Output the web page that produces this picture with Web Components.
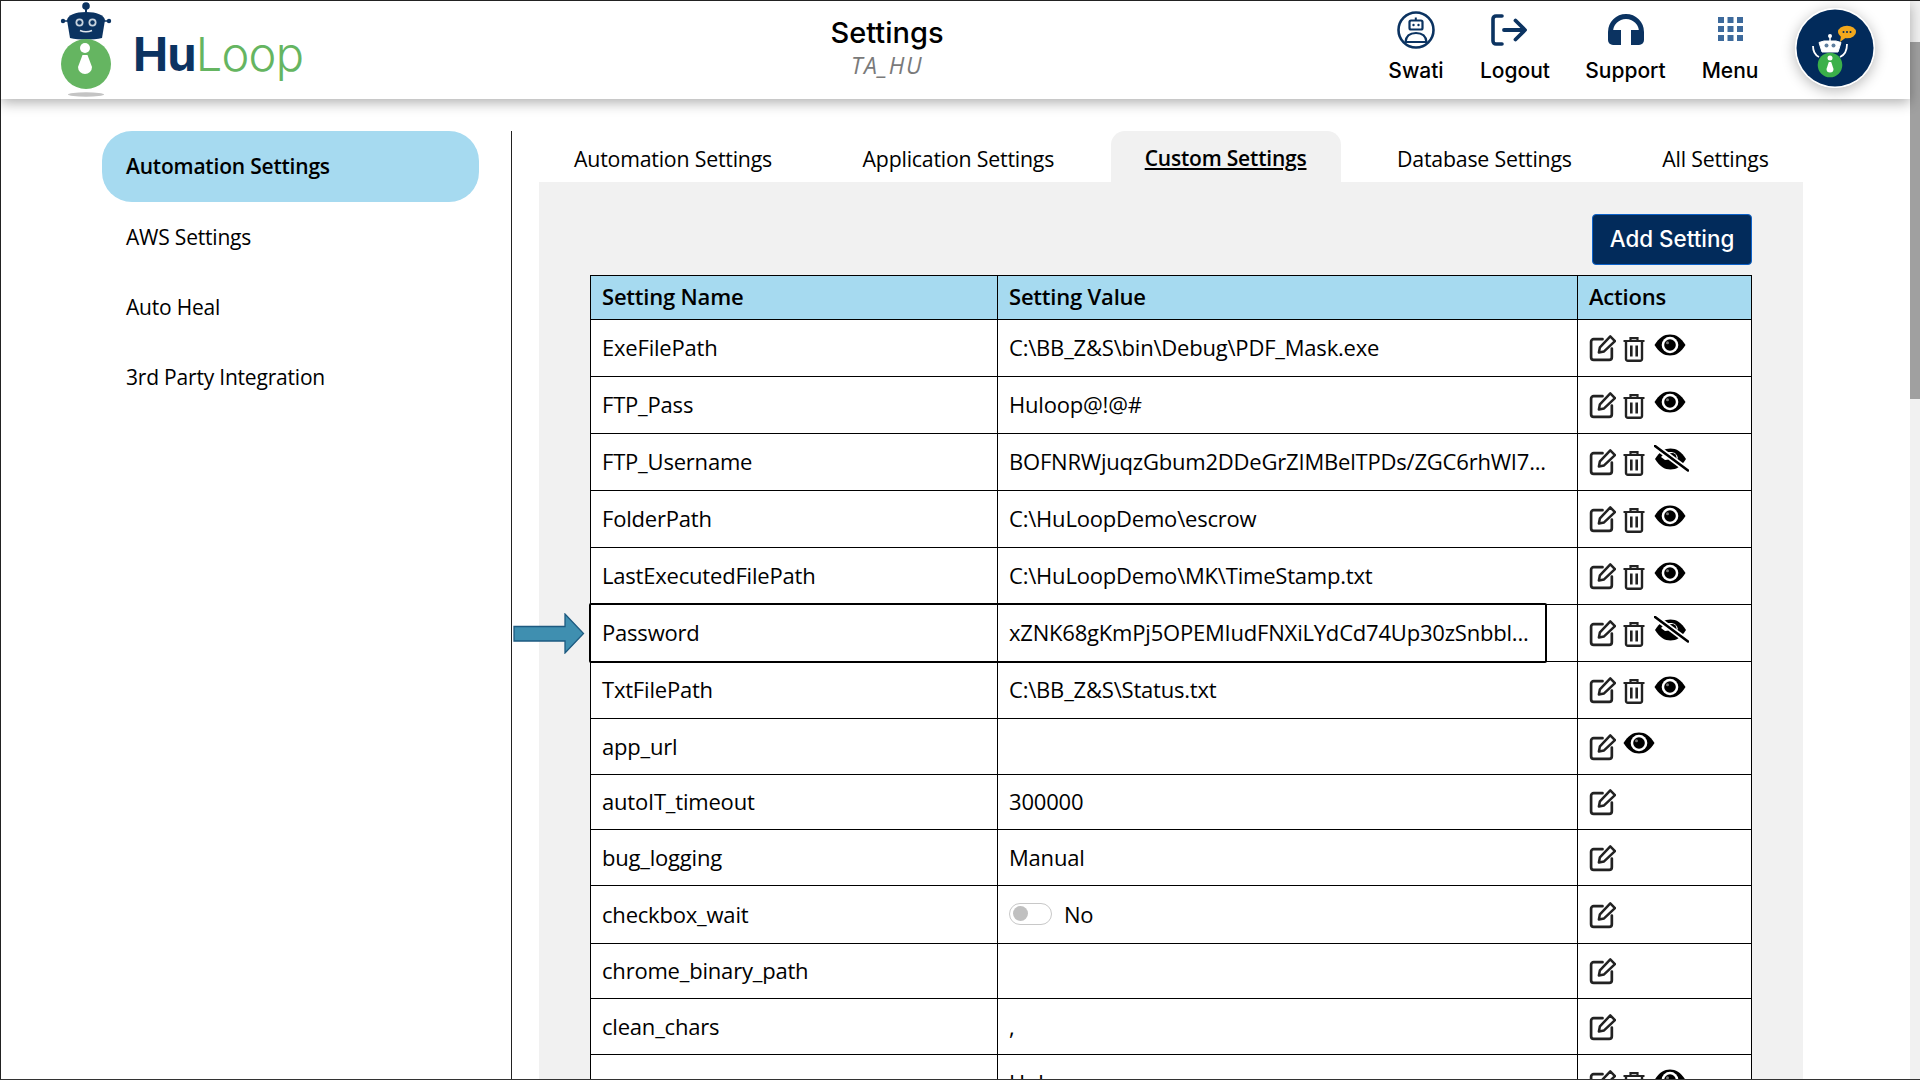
<!DOCTYPE html>
<html lang="en">
<head>
<meta charset="utf-8">
<title>Settings</title>
<style>
    html, body { margin: 0; padding: 0; background: #fff; overflow: hidden; }
    hl-app { font-family: "Open Sans", "Liberation Sans", sans-serif; color: #000; }
</style>
</head>
<body>
<hl-app></hl-app>

<script>
const ICONS = {
    edit: `<svg width="27" height="28" viewBox="0 0 26 27"><path d="M13 5H4.5A2.5 2.5 0 0 0 2 7.500V22.500A2.500 2.500 0 0 0 4.500 25H19.500A2.500 2.500 0 0 0 22 22.500V14" fill="none" stroke="#222" stroke-width="2.600" stroke-linecap="round"/><path d="M9.500 17.800L10.500 12.800L20.500 2.300L25 6.800L14.500 16.800Z" fill="none" stroke="#222" stroke-width="2.400" stroke-linejoin="round"/></svg>`,
    trash: `<svg width="22" height="25" viewBox="0 0 22 25"><path d="M0.500 4H21.500M7.500 3.500V1.200H14.500V3.500" fill="none" stroke="#222" stroke-width="2.200"/><path d="M3 4.500V22A1.800 1.800 0 0 0 4.800 23.800H17.200A1.800 1.800 0 0 0 19 22V4.500" fill="none" stroke="#222" stroke-width="2.400"/><path d="M8.300 8.500V19.500M13.700 8.500V19.500" stroke="#222" stroke-width="2.600"/></svg>`,
    eye: `<svg width="32" height="22" viewBox="0 0 32 22"><path d="M0.500 11C5 3.500 10 0.500 16 0.500S27 3.500 31.500 11C27 18.500 22 21.500 16 21.500S5 18.500 0.500 11Z" fill="#000"/><circle cx="16" cy="11" r="8.300" fill="#fff"/><circle cx="16" cy="11" r="5.800" fill="#000"/><circle cx="13.500" cy="8.800" r="1.500" fill="#777"/></svg>`,
    eyeoff: `<svg width="35" height="27" viewBox="0 0 35 27"><path d="M1 14C5.500 6.500 10.500 3.500 16.500 3.500S27.500 6.500 32 14C27.500 21.500 22.500 24.500 16.500 24.500S5.500 21.500 1 14Z" fill="#000"/><path d="M7 12C10 8.500 13 7 16.500 7C20.500 7 23 9 24 13.500L11 15Z" fill="#fff"/><circle cx="18" cy="12.500" r="4.500" fill="#000"/><path d="M1 1L34 25.500" stroke="#fff" stroke-width="6"/><path d="M1 1L34 25.500" stroke="#000" stroke-width="2.600" stroke-linecap="round"/></svg>`,
    user: `<svg width="38" height="38" viewBox="0 0 38 38"><circle cx="19" cy="19" r="17.500" fill="none" stroke="#0b3361" stroke-width="2.600"/><path d="M18.800 6.500V10" stroke="#0b3361" stroke-width="2"/><rect x="12.500" y="9.500" width="13" height="9" rx="1.500" fill="none" stroke="#0b3361" stroke-width="2.200"/><circle cx="16.500" cy="14" r="1.200" fill="#0b3361"/><circle cx="21.500" cy="14" r="1.200" fill="#0b3361"/><path d="M8.500 31C9 25 13 22 19 22S29 25 29.500 31Z" fill="none" stroke="#0b3361" stroke-width="2.200" stroke-linejoin="round"/></svg>`,
    logout: `<svg width="36" height="32" viewBox="0 0 36 32"><path d="M11 2H5A3 3 0 0 0 2 5V27A3 3 0 0 0 5 30H11" fill="none" stroke="#0b3361" stroke-width="3.600" stroke-linecap="round"/><path d="M13 16H33M24.500 6.500L34 16L24.500 25.500" fill="none" stroke="#0b3361" stroke-width="3.800" stroke-linecap="round" stroke-linejoin="round"/></svg>`,
    support: `<svg width="36" height="32" viewBox="0 0 36 32"><path d="M2.500 22V18A15.500 15.500 0 0 1 33.500 18V22" fill="none" stroke="#0b3361" stroke-width="5"/><path d="M13 16V31H5A5 5 0 0 1 0 26V21A5 5 0 0 1 5 16Z" fill="#0b3361"/><path d="M23 16V31H31A5 5 0 0 0 36 26V21A5 5 0 0 0 31 16Z" fill="#0b3361"/></svg>`,
    menu: `<svg width="25" height="24" viewBox="0 0 25 24" fill="#3d6a9c"><rect x="0" y="0" width="6" height="6"/><rect x="9.500" y="0" width="6" height="6"/><rect x="19" y="0" width="6" height="6"/><rect x="0" y="9" width="6" height="6"/><rect x="9.500" y="9" width="6" height="6"/><rect x="19" y="9" width="6" height="6"/><rect x="0" y="18" width="6" height="6"/><rect x="9.500" y="18" width="6" height="6"/><rect x="19" y="18" width="6" height="6"/></svg>`
};

class HlIcon extends HTMLElement {
    constructor() {
        super();
        this.attachShadow({ mode: 'open' });
    }

    connectedCallback() {
        this.shadowRoot.innerHTML = `
            <style>
                :host { display: inline-flex; flex: none; line-height: 0; }
            </style>
            ${ICONS[this.getAttribute('name')]}`;
    }
}
customElements.define('hl-icon', HlIcon);

const logoTemplate = document.createElement('template');
logoTemplate.innerHTML = `
    <style>
        :host { display: flex; align-items: flex-start; height: 98px; }
        svg { display: block; flex: none; }
        .word {
            margin: 22px 0 0 18px;
            font-family: Inter, "Liberation Sans", sans-serif;
            font-size: 47px;
            line-height: 62px;
            letter-spacing: -0.8px;
            white-space: nowrap;
        }
        .hu { color: #0b3361; font-weight: 700; }
        .loop { color: #65b561; font-weight: 300; }
    </style>
    <svg width="60" height="99" viewBox="0 0 60 99">
        <ellipse cx="31" cy="93.500" rx="18" ry="2.200" fill="#c4c4c4"/>
        <path d="M31 5V12" stroke="#0b3361" stroke-width="2"/>
        <circle cx="31" cy="5" r="3.800" fill="#0b3361"/>
        <circle cx="8" cy="20" r="2.200" fill="#0b3361"/>
        <circle cx="54" cy="20" r="2.200" fill="#0b3361"/>
        <path d="M8 20H15M47 20H54" stroke="#0b3361" stroke-width="1.600"/>
        <path d="M12 19C13 14 20 11 31 11S49 14 50 19L47 37C38 39 24 39 15 37Z" fill="#0b3361"/>
        <circle cx="24.500" cy="21.500" r="4" fill="#c8d3de"/><circle cx="24.500" cy="21.500" r="2.200" fill="#0b3361"/>
        <circle cx="37.500" cy="21.500" r="4" fill="#c8d3de"/><circle cx="37.500" cy="21.500" r="2.200" fill="#0b3361"/>
        <path d="M25 29.500Q31 32 37 29.500" fill="none" stroke="#dfe6ec" stroke-width="1.600"/>
        <circle cx="31" cy="63" r="25" fill="#65b561"/>
        <circle cx="30" cy="47" r="5" fill="#fff"/>
        <path d="M27.500 54H32.500L37 66A6.800 6.800 0 0 1 23 66Z" fill="#fff"/>
    </svg>
    <span class="word"><span class="hu">Hu</span><span class="loop">Loop</span></span>`;

class HlLogo extends HTMLElement {
    constructor() {
        super();
        this.attachShadow({ mode: 'open' }).appendChild(logoTemplate.content.cloneNode(true));
    }
}
customElements.define('hl-logo', HlLogo);

const navTemplate = document.createElement('template');
navTemplate.innerHTML = `
    <style>
        :host { display: flex; flex-direction: column; align-items: center; height: 98px; }
        .icon { height: 57px; display: flex; align-items: flex-start; justify-content: center; }
        ::slotted(hl-icon) { margin-top: var(--icon-top, 13px); margin-right: var(--icon-shift, 0); }
        .label {
            font-family: Inter, "Liberation Sans", sans-serif;
            font-weight: 500;
            font-size: 21px;
            line-height: 26px;
            white-space: nowrap;
        }
    </style>
    <div class="icon"><slot name="icon"></slot></div>
    <div class="label"><slot></slot></div>`;

class HlNavItem extends HTMLElement {
    constructor() {
        super();
        this.attachShadow({ mode: 'open' }).appendChild(navTemplate.content.cloneNode(true));
    }
}
customElements.define('hl-nav-item', HlNavItem);

const avatarTemplate = document.createElement('template');
avatarTemplate.innerHTML = `
    <style>
        :host { display: block; width: 80px; height: 80px; border-radius: 50%; box-shadow: 0 3px 14px rgba(0,0,0,.28); }
        svg { display: block; }
    </style>
    <svg width="80" height="80" viewBox="0 0 80 80">
        <circle cx="40" cy="40" r="40" fill="#fff"/>
        <circle cx="40" cy="40" r="38.500" fill="#022b5b"/>
        <ellipse cx="52" cy="24" rx="9" ry="6.300" fill="#f2a81d"/>
        <path d="M46 28L45 34L51 29.500Z" fill="#f2a81d"/>
        <circle cx="48.500" cy="24" r="1" fill="#022b5b"/><circle cx="52" cy="24" r="1" fill="#022b5b"/><circle cx="55.500" cy="24" r="1" fill="#022b5b"/>
        <path d="M35 28V34" stroke="#fff" stroke-width="1.500"/><circle cx="35" cy="28" r="2" fill="#fff"/>
        <path d="M24 34.500L29 33H41L46 34.500L43 44H27Z" fill="#fff" stroke="#fff" stroke-width="1" stroke-linejoin="round"/>
        <circle cx="31.500" cy="37.500" r="2" fill="#5e7e9e"/><circle cx="38.500" cy="37.500" r="2" fill="#5e7e9e"/>
        <path d="M18 38Q18 46 24 49M52 36Q52 46 45 49" fill="none" stroke="#fff" stroke-width="1.800"/>
        <circle cx="35" cy="57" r="12.300" fill="#3bb04a"/>
        <circle cx="35" cy="50" r="2.500" fill="#fff"/>
        <path d="M33.800 54H36.200L38.500 61A3.500 3.500 0 0 1 31.500 61Z" fill="#fff"/>
    </svg>`;

class HlAvatar extends HTMLElement {
    constructor() {
        super();
        this.attachShadow({ mode: 'open' }).appendChild(avatarTemplate.content.cloneNode(true));
    }
}
customElements.define('hl-avatar', HlAvatar);

const headerTemplate = document.createElement('template');
headerTemplate.innerHTML = `
    <style>
        :host {
            display: flex;
            position: relative;
            z-index: 2;
            height: 98px;
            background: #fff;
            box-shadow: 0 4px 12px rgba(0, 0, 0, .3);
        }
        hl-logo { width: 646px; margin-left: 54px; flex: none; }
        .title { width: 372px; flex: none; text-align: center; }
        h1 {
            margin: 15px 0 0;
            font: 500 29px/34px Inter, "Liberation Sans", sans-serif;
        }
        .sub {
            font: italic 400 23px/24px "Open Sans", "Liberation Sans", sans-serif;
            letter-spacing: 1.500px;
            color: #7a7a7a;
            margin-top: 3px;
        }
        nav { display: flex; gap: 36px; margin-left: 314px; }
        hl-avatar { margin: 7px 0 0 37px; flex: none; }
    </style>
    <hl-logo></hl-logo>
    <div class="title">
        <h1>Settings</h1>
        <div class="sub">TA_HU</div>
    </div>
    <nav>
        <hl-nav-item style="width: 58px; --icon-top: 10px"><hl-icon slot="icon" name="user"></hl-icon>Swati</hl-nav-item>
        <hl-nav-item style="width: 68px; --icon-shift: 12px"><hl-icon slot="icon" name="logout"></hl-icon>Logout</hl-nav-item>
        <hl-nav-item style="width: 81px"><hl-icon slot="icon" name="support"></hl-icon>Support</hl-nav-item>
        <hl-nav-item style="width: 56px; --icon-top: 16px"><hl-icon slot="icon" name="menu"></hl-icon>Menu</hl-nav-item>
    </nav>
    <hl-avatar></hl-avatar>`;

class HlHeader extends HTMLElement {
    constructor() {
        super();
        this.attachShadow({ mode: 'open' }).appendChild(headerTemplate.content.cloneNode(true));
    }
}
customElements.define('hl-header', HlHeader);

const sideTemplate = document.createElement('template');
sideTemplate.innerHTML = `
    <style>
        :host {
            display: block;
            box-sizing: border-box;
            width: 511px;
            flex: none;
            margin-top: 32px;
            padding: 0 32px 0 101px;
            border-right: 1px solid #222;
        }
        div {
            height: 71px;
            line-height: 71px;
            padding-left: 24px;
            font-size: 21px;
            letter-spacing: -0.2px;
            white-space: nowrap;
        }
        .active { background: #a6daf0; border-radius: 30px; font-weight: 600; }
        div + div { height: 70px; line-height: 70px; }
    </style>
    <div class="active">Automation Settings</div>
    <div>AWS Settings</div>
    <div>Auto Heal</div>
    <div>3rd Party Integration</div>`;

class HlSideNav extends HTMLElement {
    constructor() {
        super();
        this.attachShadow({ mode: 'open' }).appendChild(sideTemplate.content.cloneNode(true));
    }
}
customElements.define('hl-side-nav', HlSideNav);

const tabsTemplate = document.createElement('template');
tabsTemplate.innerHTML = `
    <style>
        :host { display: flex; gap: 22.500px; height: 51px; padding-left: 1px; }
        div {
            padding: 4px 34px 0;
            line-height: 47px;
            font-size: 21.300px;
            letter-spacing: -0.2px;
            white-space: nowrap;
        }
        .on {
            background: #f1f1f1;
            border-radius: 14px 14px 0 0;
            font-weight: 600;
            font-size: 21px;
            text-decoration: underline;
        }
    </style>
    <div>Automation Settings</div>
    <div>Application Settings</div>
    <div class="on">Custom Settings</div>
    <div>Database Settings</div>
    <div>All Settings</div>`;

class HlTabs extends HTMLElement {
    constructor() {
        super();
        this.attachShadow({ mode: 'open' }).appendChild(tabsTemplate.content.cloneNode(true));
    }
}
customElements.define('hl-tabs', HlTabs);

const ROWS = [
    ['ExeFilePath', 'C:\\BB_Z&S\\bin\\Debug\\PDF_Mask.exe', 'edit trash eye', 57],
    ['FTP_Pass', 'Huloop@!@#', 'edit trash eye', 57],
    ['FTP_Username', 'BOFNRWjuqzGbum2DDeGrZIMBelTPDs/ZGC6rhWI7...', 'edit trash eyeoff', 57],
    ['FolderPath', 'C:\\HuLoopDemo\\escrow', 'edit trash eye', 57],
    ['LastExecutedFilePath', 'C:\\HuLoopDemo\\MK\\TimeStamp.txt', 'edit trash eye', 57],
    ['Password', 'xZNK68gKmPj5OPEMIudFNXiLYdCd74Up30zSnbbl...', 'edit trash eyeoff', 57],
    ['TxtFilePath', 'C:\\BB_Z&S\\Status.txt', 'edit trash eye', 57],
    ['app_url', '', 'edit eye', 56],
    ['autoIT_timeout', '300000', 'edit', 55],
    ['bug_logging', 'Manual', 'edit', 56],
    ['checkbox_wait', null, 'edit', 58],
    ['chrome_binary_path', '', 'edit', 55],
    ['clean_chars', ',', 'edit', 56],
    ['', 'Hul', 'edit trash eye', 57]
];

const tableStyle = `
    <style>
        :host { display: block; }
        table { border-collapse: collapse; table-layout: fixed; width: 1161px; }
        th, td { border: 1px solid #000; padding: 0 0 0 11px; font-size: 22px; letter-spacing: -0.2px; white-space: nowrap; overflow: hidden; }
        th { background: #a6daf0; font-weight: 600; text-align: left; height: 44px; padding-bottom: 4px; box-sizing: border-box; }
        td { background: #fff; box-sizing: border-box; padding-bottom: 2px; }
        td:last-child { padding-bottom: 0; }
        .acts { display: flex; align-items: center; gap: 7px; }
        .acts hl-icon[name="trash"] { margin-top: 2px; margin-right: 2px; }
        .acts hl-icon[name="eye"] { margin-top: -7px; }
        .acts hl-icon[name="eyeoff"] { margin-top: -8px; }
        .toggle { display: flex; align-items: center; gap: 12px; }
        .toggle i { display: block; box-sizing: border-box; width: 43px; height: 22px; border: 1.500px solid #c8c8c8; border-radius: 11px; position: relative; }
        .toggle i::after { content: ""; position: absolute; left: 3px; top: 2px; width: 15px; height: 15px; border-radius: 50%; background: #c0c0c0; }
    </style>`;

class HlSettingsTable extends HTMLElement {
    constructor() {
        super();
        this.attachShadow({ mode: 'open' });
    }

    connectedCallback() {
        let rows = ROWS.map(r => {
            let value = r[1] === null
                ? `<div class="toggle"><i></i><span>No</span></div>`
                : r[1].replace(/&/g, '&amp;');
            let icons = r[2].split(' ').map(n => `<hl-icon name="${n}"></hl-icon>`).join('');
            return `<tr style="height:${r[3]}px"><td>${r[0]}</td><td>${value}</td><td><div class="acts">${icons}</div></td></tr>`;
        }).join('');
        this.shadowRoot.innerHTML = `${tableStyle}
            <table>
                <colgroup><col style="width:407px"><col style="width:580px"><col style="width:174px"></colgroup>
                <thead><tr><th>Setting Name</th><th>Setting Value</th><th>Actions</th></tr></thead>
                <tbody>${rows}</tbody>
            </table>`;
    }
}
customElements.define('hl-settings-table', HlSettingsTable);

const panelTemplate = document.createElement('template');
panelTemplate.innerHTML = `
    <style>
        :host {
            display: block;
            box-sizing: border-box;
            width: 1264px;
            background: #f1f1f1;
            padding: 32px 51px 0;
            height: 900px;
        }
        .bar { display: flex; justify-content: flex-end; margin-bottom: 10px; }
        button {
            box-sizing: border-box;
            width: 160px;
            height: 51px;
            padding: 0 0 2px;
            background: #022b5b;
            color: #fff;
            border: 1.500px solid #0d62c9;
            border-radius: 4px;
            font: 500 22.400px Inter, "Liberation Sans", sans-serif;
        }
    </style>
    <div class="bar"><button>Add Setting</button></div>
    <slot></slot>`;

class HlPanel extends HTMLElement {
    constructor() {
        super();
        this.attachShadow({ mode: 'open' }).appendChild(panelTemplate.content.cloneNode(true));
    }
}
customElements.define('hl-panel', HlPanel);

const appTemplate = document.createElement('template');
appTemplate.innerHTML = `
    <style>
        :host {
            display: block;
            position: relative;
            box-sizing: border-box;
            width: 1920px;
            height: 1080px;
            overflow: hidden;
            border-top: 1px solid #222;
            border-bottom: 1px solid #333;
            border-left: 1px solid #222;
            background: #fff;
        }
        .page { width: 1909px; height: 100%; }
        .body { display: flex; height: 980px; }
        main { margin: 32px 0 0 27px; width: 1265px; flex: none; }
        .scroll { position: absolute; right: 0; top: 0; bottom: 0; width: 10px; background: #f1f1f1; }
        .scroll div { margin-top: 41px; height: 357px; background: #a0a0a0; }
        .mark {
            position: absolute;
            left: 588px;
            top: 602px;
            width: 958px;
            height: 60px;
            box-sizing: border-box;
            border: 2px solid #000;
            border-radius: 2px;
        }
        .arrow { position: absolute; left: 512px; top: 612px; display: block; }
    </style>
    <div class="page">
        <hl-header></hl-header>
        <div class="body">
            <hl-side-nav></hl-side-nav>
            <main>
                <hl-tabs></hl-tabs>
                <hl-panel><hl-settings-table></hl-settings-table></hl-panel>
            </main>
        </div>
    </div>
    <div class="mark"></div>
    <svg class="arrow" width="72" height="41" viewBox="0 0 72 41">
        <path d="M1 13.500H52V1L70.500 20.500L52 40V28H1Z" fill="#3f8fb0" stroke="#1d5a80" stroke-width="1.300"/>
    </svg>
    <div class="scroll"><div></div></div>`;

class HlApp extends HTMLElement {
    constructor() {
        super();
        this.attachShadow({ mode: 'open' }).appendChild(appTemplate.content.cloneNode(true));
    }
}
customElements.define('hl-app', HlApp);
</script>
</body>
</html>
